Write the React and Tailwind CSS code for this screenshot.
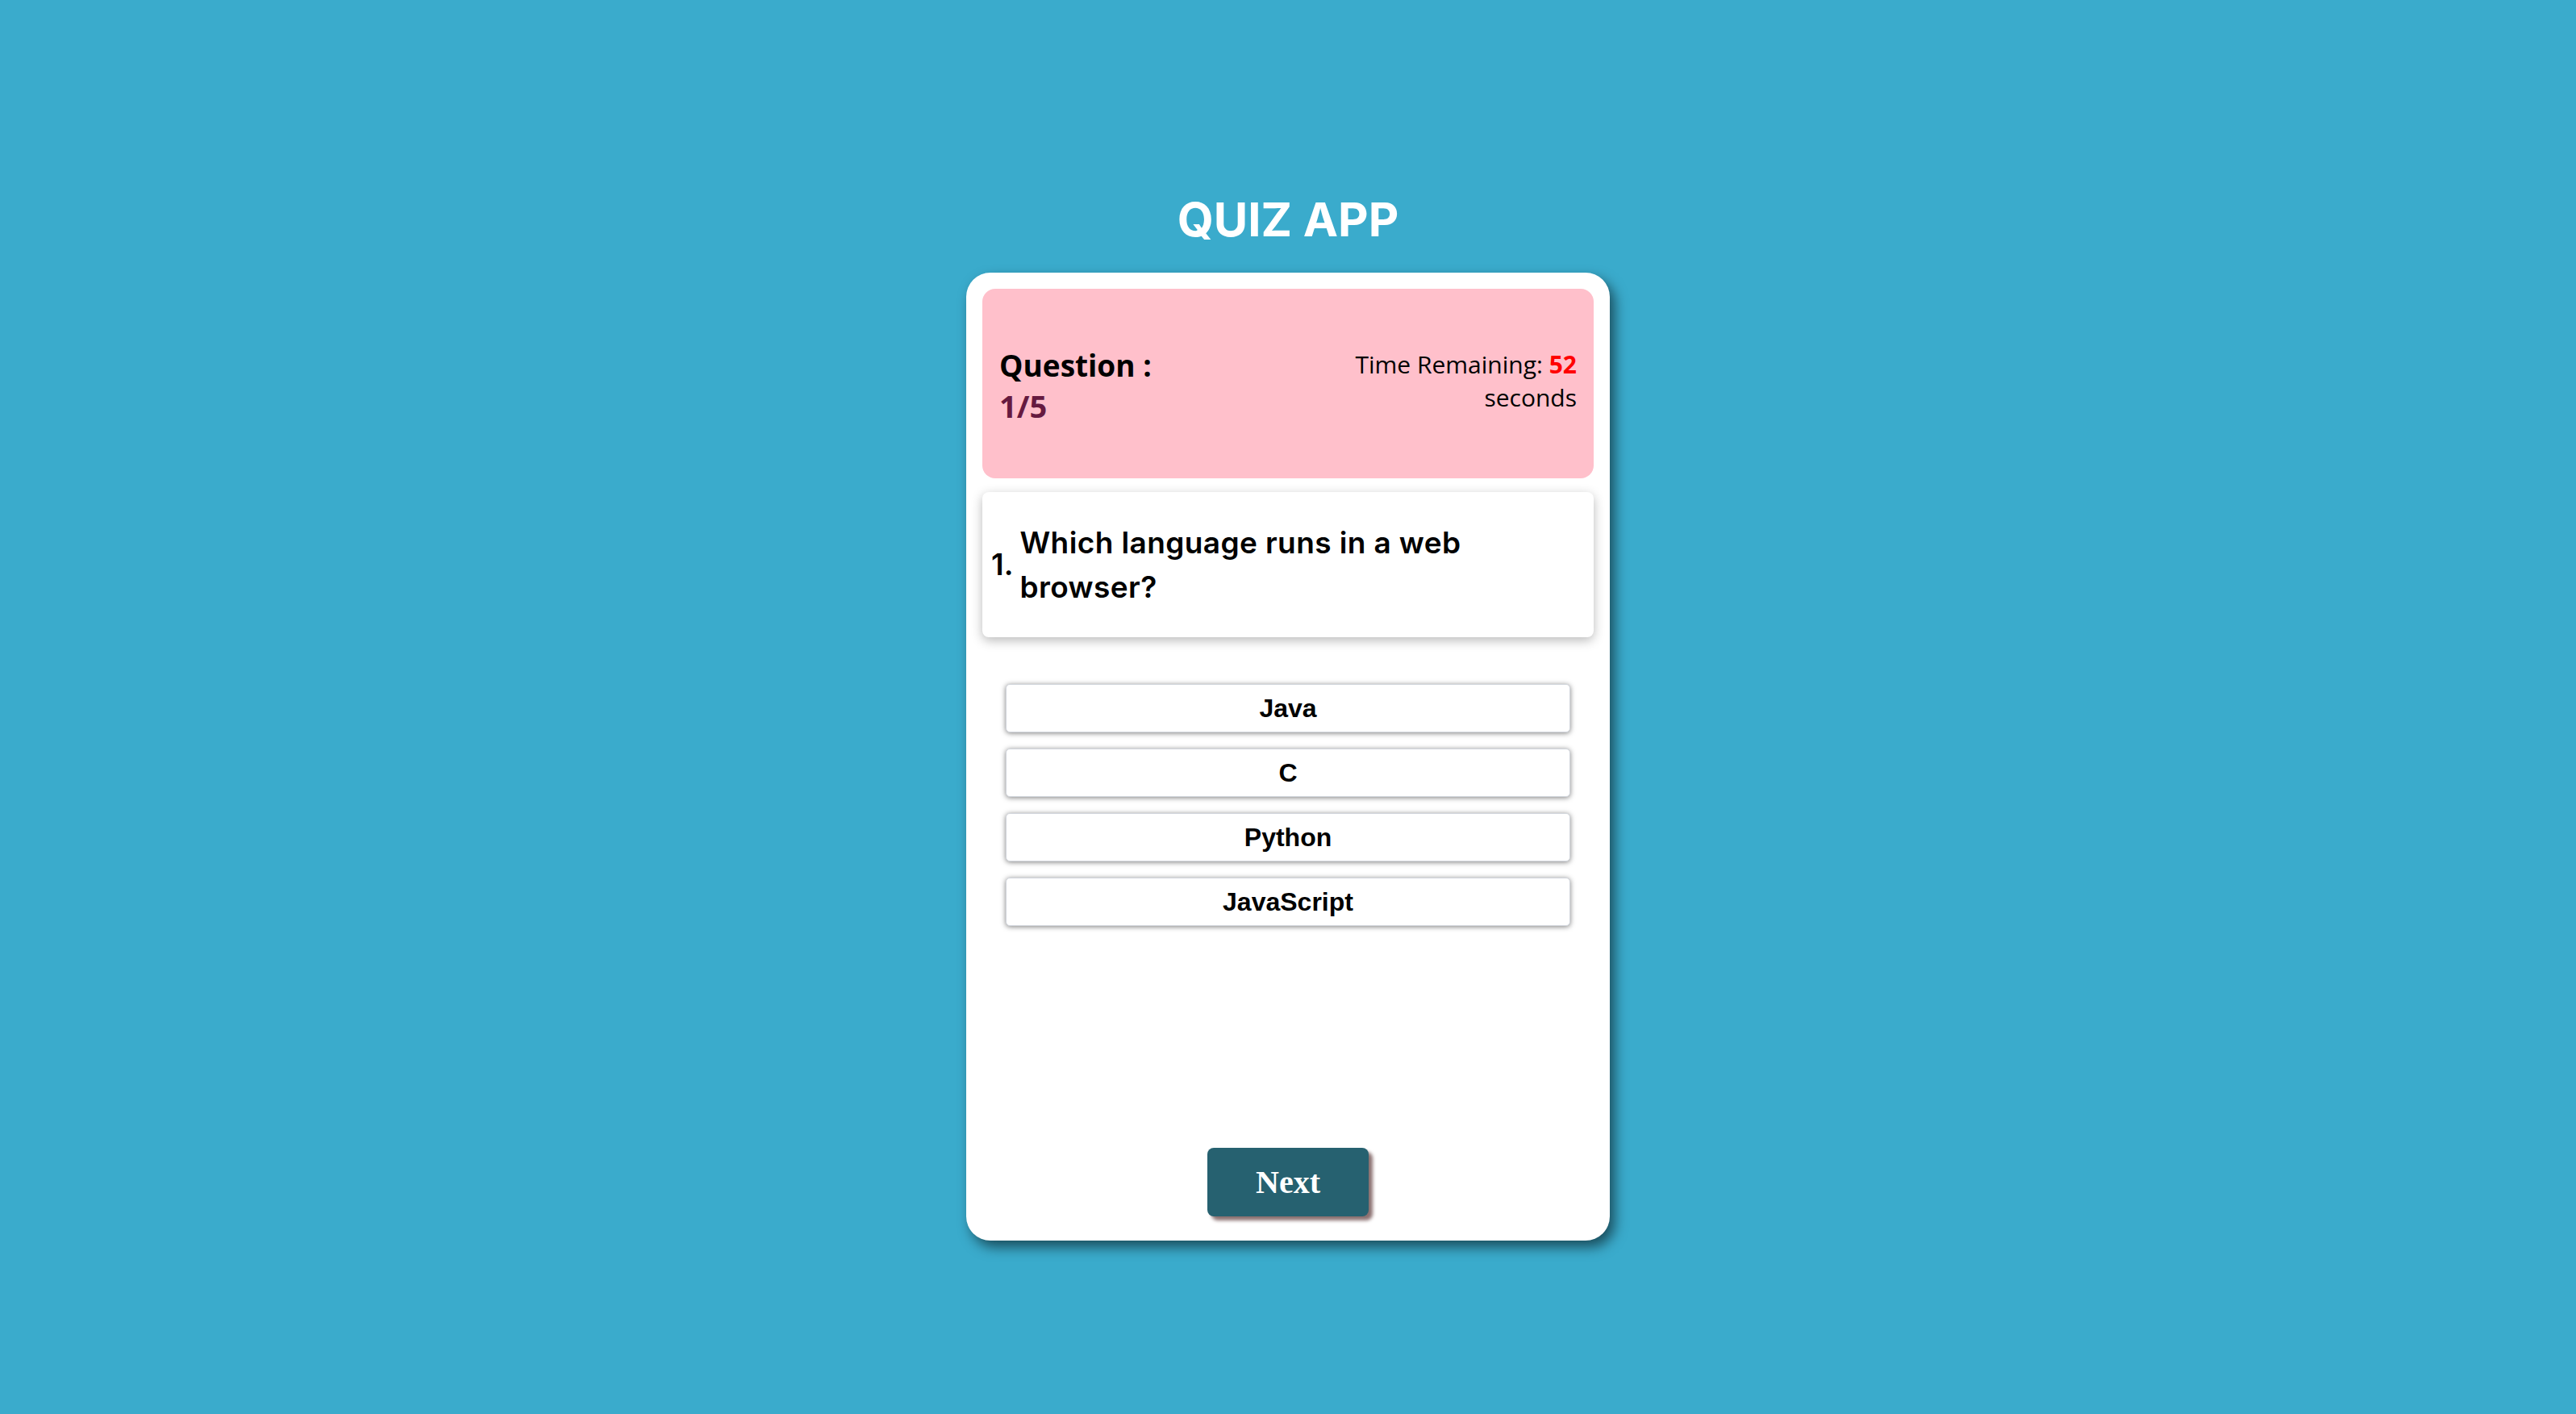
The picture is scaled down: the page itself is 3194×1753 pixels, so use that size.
import { useState } from 'react';

const options = ['Java', 'C', 'Python', 'JavaScript'];

export default function App() {
  const [selected, setSelected] = useState(null);

  return (
    <div className="min-h-screen w-full bg-[#3aabcc] flex flex-col items-center pt-[233px]">
      <h1 className="text-white text-[58px] leading-[79px] font-bold font-['Inter',sans-serif] mb-[26px]">
        QUIZ APP
      </h1>

      {/* Carte du quiz */}
      <div className="w-[798px] h-[1200px] bg-white rounded-[30px] p-[20px] flex flex-col shadow-[6px_8px_16px_rgba(0,0,0,0.55)]">
        <div className="h-[235px] bg-[#ffc0cb] rounded-[16px] px-[21px] flex justify-between items-center font-['Open_Sans',sans-serif]">
          <div className="font-bold text-[37px] leading-[51px] mt-[4px]">
            <div className="text-black">Question :</div>
            <div className="text-[#661a40] text-[38px]">1/5</div>
          </div>
          <div className="text-right text-[30px] leading-[41px] text-black -mt-[8px]">
            <div>
              Time Remaining: <span className="font-bold text-[#ff0000]">52</span>
            </div>
            <div>seconds</div>
          </div>
        </div>

        <div className="mt-[17px] h-[180px] bg-white rounded-[8px] shadow-[0_4px_14px_rgba(0,0,0,0.28)] pl-[11px] pr-[12px] flex items-center gap-[8px] font-['Inter',sans-serif] font-semibold text-black">
          <span className="text-[37px]">1.</span>
          <p className="text-[37px] leading-[55px] tracking-[0.4px] w-[620px]">Which language runs in a web browser?</p>
        </div>

        <div className="mt-[58px] flex flex-col items-center gap-[20px]">
          {options.map((opt, i) => (
            <button
              key={opt}
              onClick={() => setSelected(i)}
              className={`w-[700px] h-[60px] rounded-[5px] border border-gray-300 shadow-[0_1px_6px_rgba(0,0,0,0.5)] font-['Liberation_Sans',Arial,sans-serif] font-bold text-[32px] text-black ${
                selected === i ? 'bg-gray-100' : 'bg-white'
              }`}
            >
              {opt}
            </button>
          ))}
        </div>

        <button className="mt-auto mb-[10px] self-center w-[200px] h-[85px] rounded-[8px] bg-[#266170] text-white font-['Liberation_Serif',serif] font-bold text-[40px] shadow-[5px_5px_4px_#8a7070]">
          Next
        </button>
      </div>
    </div>
  );
}
